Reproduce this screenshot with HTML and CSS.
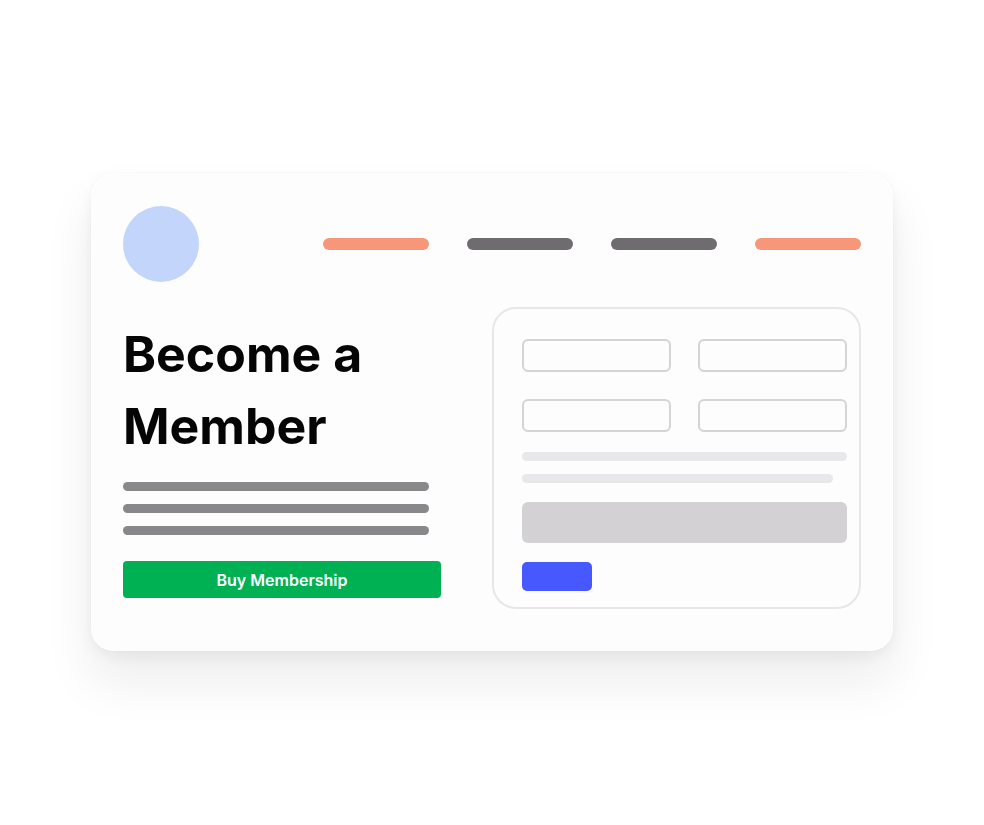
FILE: index.html
```html
<!DOCTYPE html>
<html>
<head>
<meta charset="utf-8">
<link rel="stylesheet" href="styles.css">
</head>
<body>
<div class="card">
  <div class="header">
    <div class="logo"></div>
    <nav class="nav">
      <span class="nav-item accent"></span>
      <span class="nav-item"></span>
      <span class="nav-item"></span>
      <span class="nav-item accent"></span>
    </nav>
  </div>
  <div class="main">
    <div class="intro">
      <h1 class="title">Become a<br>Member</h1>
      <div class="lines">
        <span class="line"></span>
        <span class="line"></span>
        <span class="line"></span>
      </div>
      <button class="buy">Buy Membership</button>
    </div>
    <div class="form">
      <div class="fields">
        <span class="field"></span>
        <span class="field"></span>
        <span class="field"></span>
        <span class="field"></span>
      </div>
      <span class="hint"></span>
      <span class="hint short"></span>
      <span class="bigbar"></span>
      <span class="submit"></span>
    </div>
  </div>
</div>
</body>
</html>
```

FILE: styles.css
```css
* { box-sizing: border-box; }
html, body { margin: 0; padding: 0; background: #ffffff; }
body {
  font-family: Inter, "Liberation Sans", sans-serif;
  width: 984px;
  height: 825px;
  overflow: hidden;
}
.card {
  margin: 173px 0 0 91px;
  width: 802px;
  height: 478px;
  background: #fdfdfe;
  border-radius: 22px;
  padding: 33px 32px 0 32px;
  box-shadow: 0 30px 50px rgba(30, 25, 40, 0.08), 0 6px 14px rgba(30, 25, 40, 0.05), 0 0 2px rgba(0,0,0,0.03);
}
.header {
  display: flex;
  align-items: center;
  justify-content: space-between;
}
.logo {
  width: 76px;
  height: 76px;
  border-radius: 50%;
  background: #c3d5fa;
}
.nav {
  display: flex;
  gap: 38px;
}
.nav-item {
  display: block;
  width: 106px;
  height: 12px;
  border-radius: 6px;
  background: #6e6c6f;
}
.nav-item.accent { background: #f7977a; }
.main {
  display: flex;
  gap: 51px;
  margin-top: 25px;
}
.intro {
  width: 318px;
  padding-top: 11px;
}
.title {
  margin: 0;
  font-size: 50px;
  line-height: 72px;
  font-weight: 700;
  color: #050505;
}
.lines {
  display: flex;
  flex-direction: column;
  gap: 13px;
  margin-top: 20px;
}
.line {
  display: block;
  width: 306px;
  height: 9px;
  border-radius: 5px;
  background: #888789;
}
.buy {
  display: block;
  margin-top: 26px;
  width: 318px;
  height: 37px;
  border: 0;
  border-radius: 4px;
  background: #00b153;
  color: #ffffff;
  font-family: Inter, "Liberation Sans", sans-serif;
  font-size: 16px;
  font-weight: 600;
  padding: 0;
}
.form {
  width: 369px;
  height: 302px;
  border: 2px solid #e7e6e9;
  border-radius: 24px;
  padding: 30px 12px 0 28px;
  display: flex;
  flex-direction: column;
  align-items: flex-start;
}
.fields {
  display: grid;
  grid-template-columns: 149px 149px;
  column-gap: 27px;
  row-gap: 27px;
}
.field {
  display: block;
  height: 33px;
  border: 2px solid #d4d3d6;
  border-radius: 6px;
}
.hint {
  display: block;
  width: 325px;
  height: 9px;
  border-radius: 5px;
  background: #e8e7ea;
  margin-top: 20px;
}
.hint.short {
  width: 311px;
  margin-top: 13px;
}
.bigbar {
  display: block;
  width: 325px;
  height: 41px;
  border-radius: 6px;
  background: #d3d1d4;
  margin-top: 19px;
}
.submit {
  display: block;
  width: 70px;
  height: 29px;
  border-radius: 5px;
  background: #4858ff;
  margin-top: 19px;
}
```
